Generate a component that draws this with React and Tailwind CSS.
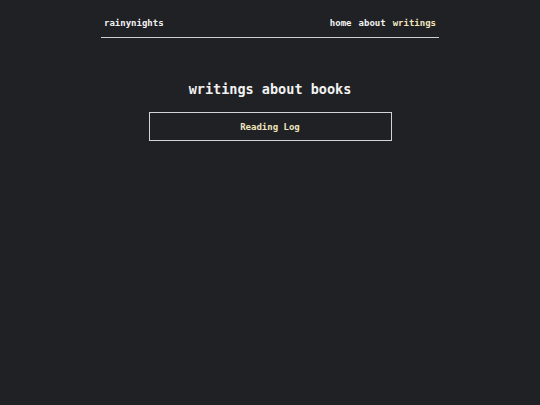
export default function App() {
  return (
    <div className="min-h-[405px] w-full bg-[#202124] text-[#f2f2f2]" style={{ fontFamily: '"DejaVu Sans Mono", "Liberation Mono", monospace' }}>
      <div className="mx-auto w-[338px]">
        <header className="flex items-center justify-between pl-[3px] pr-[3px] pt-[16px] pb-[7px] border-b border-[#cfcfcf] text-[9px] font-bold leading-[14px]">
          <span>rainynights</span>
          <nav className="flex gap-[7px]">
            <span>home</span>
            <span>about</span>
            <span className="text-[#efe6bf]">writings</span>
          </nav>
        </header>
        <main className="flex flex-col items-center pt-[42px]">
          <h1 className="text-[13.5px] font-bold leading-[18px]">writings about books</h1>
          <div className="mt-[14px] w-[243px] h-[29px] pt-[2px] border border-[#d4d4d4] flex items-center justify-center text-[9px] font-bold text-[#efe6bf]">
            Reading Log
          </div>
        </main>
      </div>
    </div>
  );
}
